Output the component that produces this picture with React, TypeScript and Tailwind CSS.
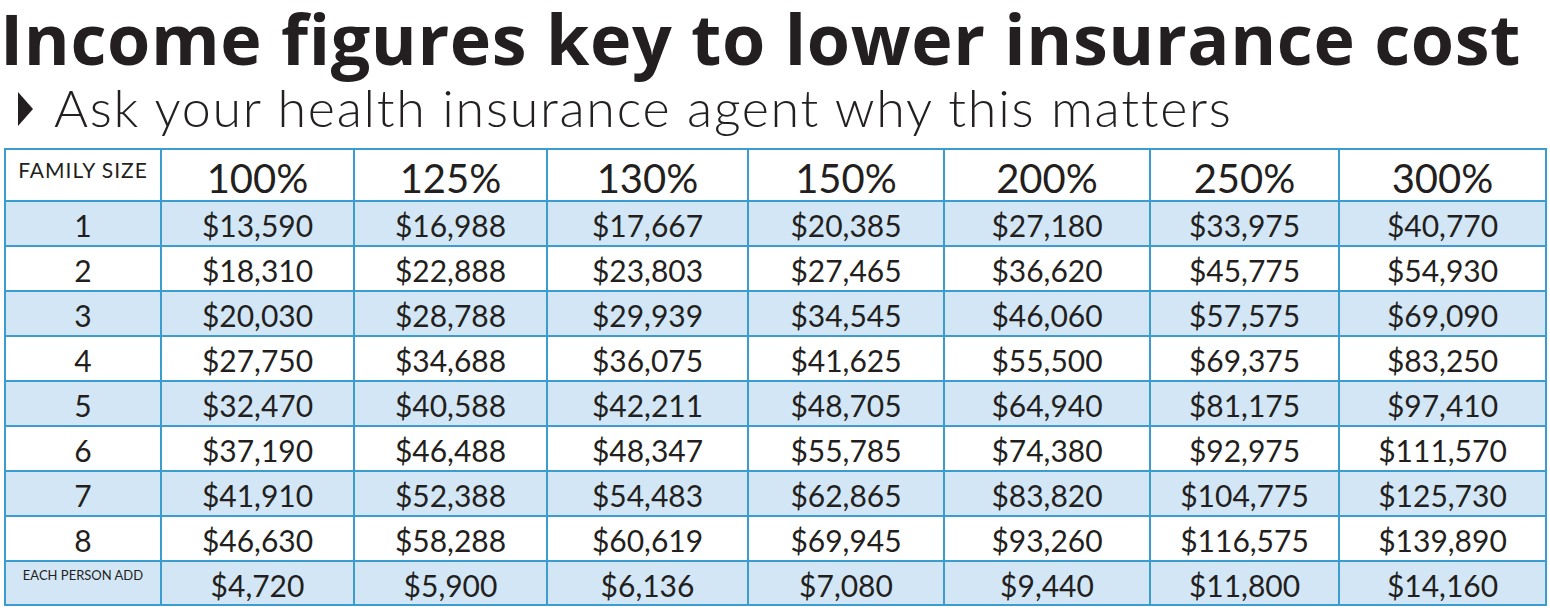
const cols = ["100%", "125%", "130%", "150%", "200%", "250%", "300%"]

const rows: [string, string[]][] = [
  ["1", ["$13,590", "$16,988", "$17,667", "$20,385", "$27,180", "$33,975", "$40,770"]],
  ["2", ["$18,310", "$22,888", "$23,803", "$27,465", "$36,620", "$45,775", "$54,930"]],
  ["3", ["$20,030", "$28,788", "$29,939", "$34,545", "$46,060", "$57,575", "$69,090"]],
  ["4", ["$27,750", "$34,688", "$36,075", "$41,625", "$55,500", "$69,375", "$83,250"]],
  ["5", ["$32,470", "$40,588", "$42,211", "$48,705", "$64,940", "$81,175", "$97,410"]],
  ["6", ["$37,190", "$46,488", "$48,347", "$55,785", "$74,380", "$92,975", "$111,570"]],
  ["7", ["$41,910", "$52,388", "$54,483", "$62,865", "$83,820", "$104,775", "$125,730"]],
  ["8", ["$46,630", "$58,288", "$60,619", "$69,945", "$93,260", "$116,575", "$139,890"]],
]

const addRow = ["$4,720", "$5,900", "$6,136", "$7,080", "$9,440", "$11,800", "$14,160"]

// widths measured border to border
const widths = [156, 193, 193, 201, 196, 206, 189, 207]

export default function App() {
  return (
    <div className="w-[1550px] h-[612px] bg-white text-[#231f20] overflow-hidden font-['Lato',sans-serif]">
      <h1 className="font-['Open_Sans',sans-serif] text-[70px] font-bold leading-[72px] tracking-[0.6px] mt-[2px] whitespace-nowrap">
        Income figures key to lower insurance cost
      </h1>
      <div className="flex items-center h-[70px] -mt-[2px] whitespace-nowrap">
        <svg width="16" height="34" viewBox="0 0 16 34" className="ml-[18px] mr-[20px] mt-[4px]">
          <polygon points="0,0 15,17 0,34" fill="#231f20" />
        </svg>
        <span className="text-[52px] font-light leading-none tracking-[1.7px]">Ask your health insurance agent why this matters</span>
      </div>
      <table className="ml-[4px] mt-[6px] border-collapse table-fixed w-[1541px] text-center">
        <colgroup>
          {widths.map((w, i) => (
            <col key={i} style={{ width: w }} />
          ))}
        </colgroup>
        <thead>
          <tr className="h-[52px]">
            <th className="border-2 border-[#3a9ccf] align-top pt-[7px] text-[21px] font-normal leading-tight tracking-[1px]">FAMILY SIZE</th>
            {cols.map((c) => (
              <th key={c} className="border-2 border-[#3a9ccf] text-[40px] font-normal leading-none pt-[6px]">
                {c}
              </th>
            ))}
          </tr>
        </thead>
        <tbody>
          {rows.map(([size, vals], i) => (
            <tr key={size} className={`h-[45px] ${i % 2 === 0 ? "bg-[#d3e6f5]" : "bg-white"}`}>
              <td className="border-2 border-[#3a9ccf] text-[30px] leading-none pt-[3px]">{size}</td>
              {vals.map((v, j) => (
                <td key={j} className="border-2 border-[#3a9ccf] text-[30px] leading-none pt-[3px]">
                  {v}
                </td>
              ))}
            </tr>
          ))}
          <tr className="h-[44px] bg-[#d3e6f5]">
            <td className="border-2 border-[#3a9ccf] align-top pt-[7px] text-[13px] leading-none">EACH PERSON ADD</td>
            {addRow.map((v, j) => (
              <td key={j} className="border-2 border-[#3a9ccf] text-[30px] leading-none pt-[3px]">
                {v}
              </td>
            ))}
          </tr>
        </tbody>
      </table>
    </div>
  )
}
